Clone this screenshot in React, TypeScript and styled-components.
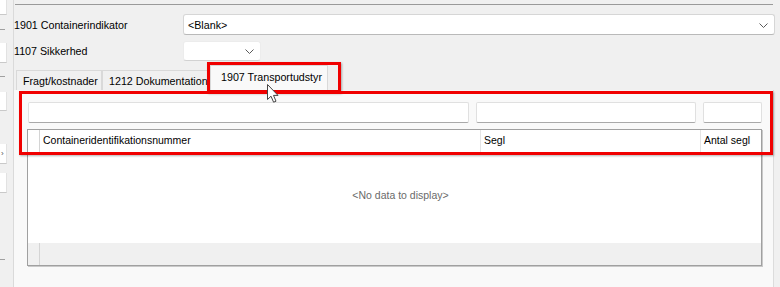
import React from "react";
import styled, { createGlobalStyle } from "styled-components";

const GlobalStyle = createGlobalStyle`
  html, body { margin: 0; padding: 0; background: #f0f0f0; }
  body { width: 780px; height: 287px; overflow: hidden; font-family: "Liberation Sans", Arial, sans-serif; }
  * { box-sizing: border-box; }
`;

const Window = styled.div`
  position: relative;
  display: flex;
  width: 780px;
  height: 287px;
  background: #f0f0f0;
  overflow: hidden;
`;

const LeftStrip = styled.div`
  width: 14px;
  flex: none;
  display: flex;
  flex-direction: column;
  border-right: 1px solid #dadada;
`;

const StubBox = styled.div<{ $top: number; $h: number }>`
  margin-top: ${(p) => p.$top}px;
  width: 7px;
  height: ${(p) => p.$h}px;
  background: #fff;
  border-bottom: 1px solid #c9c9c9;
  border-right: 1px solid #e2e2e2;
  font-size: 8px;
  color: #555;
  line-height: ${(p) => p.$h}px;
  overflow: hidden;
  text-indent: 1px;
`;

const StubLine = styled.div<{ $top: number }>`
  margin-top: ${(p) => p.$top}px;
  width: 5px;
  height: 1px;
  background: #a0a0a0;
`;

const Main = styled.div`
  flex: 1;
  display: flex;
  flex-direction: column;
  min-width: 0;
`;

const TopRule = styled.div`
  margin: 4px 7px 0 1px;
  height: 1px;
  background: #9a9a9a;
`;

const FormRow = styled.div<{ $top: number; $h: number }>`
  display: flex;
  align-items: center;
  margin-top: ${(p) => p.$top}px;
  height: ${(p) => p.$h}px;
`;

const Label = styled.div`
  width: 169px;
  flex: none;
  font-size: 10.7px;
  color: #000;
`;

const Combo = styled.div<{ $w?: number; $soft?: boolean }>`
  position: relative;
  display: flex;
  align-items: center;
  height: 100%;
  ${(p) => (p.$w ? `width: ${p.$w}px;` : "flex: 1; margin-right: 5px;")}
  background: #fff;
  border: 1px solid ${(p) => (p.$soft ? "#ececec" : "#d6d6d6")};
  border-bottom-color: ${(p) => (p.$soft ? "#d2d2d2" : "#b9b9b9")};
  border-radius: 3px;
  padding-left: 4px;
  font-size: 10.7px;
  color: #000;
`;

const Chevron = styled.svg`
  position: absolute;
  right: 6px;
  top: 50%;
  margin-top: -2px;
`;

const TabStrip = styled.div`
  display: flex;
  align-items: flex-end;
  height: 29px;
  padding-left: 2px;
`;

const Tab = styled.div<{ $w: number; $active?: boolean }>`
  width: ${(p) => p.$w}px;
  height: ${(p) => (p.$active ? 25 : 20)}px;
  flex: none;
  display: flex;
  align-items: center;
  padding-left: ${(p) => (p.$active ? 10 : 6)}px;
  padding-bottom: ${(p) => (p.$active ? 3 : 0)}px;
  font-size: 10.7px;
  color: #000;
  white-space: nowrap;
  overflow: hidden;
  background: ${(p) => (p.$active ? "#f9f9f9" : "#f0f0f0")};
  border: 1px solid #d9d9d9;
  border-bottom: none;
  margin-left: ${(p) => (p.$active ? 2 : 0)}px;
  & + & { border-left: ${(p) => (p.$active ? "1px solid #d9d9d9" : "none")}; }
`;

const TabPage = styled.div`
  flex: 1;
  display: flex;
  flex-direction: column;
  margin-right: 6px;
  background: #f9f9f9;
  border-right: 1px solid #dcdcdc;
  padding: 12px 0 0 13px;
`;

const FilterRow = styled.div`
  display: flex;
  height: 21px;
  padding-left: 1px;
`;

const FilterInput = styled.div<{ $w: number; $gap: number }>`
  width: ${(p) => p.$w}px;
  margin-right: ${(p) => p.$gap}px;
  height: 100%;
  background: #fff;
  border: 1px solid #e0e0e0;
  border-bottom-color: #a9a9a9;
  border-radius: 2px;
`;

const Grid = styled.div`
  margin-top: 6px;
  width: 735px;
  height: 137px;
  display: flex;
  flex-direction: column;
  background: #fff;
  border: 1px solid #a0a0a0;
  box-shadow: 1px 1px 0 #c9c9c9;
`;

const HeaderRow = styled.div`
  display: flex;
  height: 22px;
  flex: none;
  background: #fff;
`;

const IndicatorCell = styled.div`
  width: 12px;
  flex: none;
  border-right: 1px solid #d4d4d4;
`;

const HeaderCell = styled.div<{ $w?: number }>`
  ${(p) => (p.$w ? `width: ${p.$w}px; flex: none;` : "flex: 1;")}
  display: flex;
  align-items: center;
  padding-left: 3px;
  padding-bottom: 2px;
  font-size: 10.5px;
  color: #000;
  border-right: 1px solid #e4e4e4;
  white-space: nowrap;
  overflow: hidden;
  &:last-child { border-right: none; }
`;

const Body = styled.div`
  flex: 1;
  display: flex;
  align-items: center;
  justify-content: center;
  padding-left: 12px;
  padding-bottom: 5px;
  font-size: 10.5px;
  color: #6a6a6a;
`;

const Footer = styled.div`
  height: 22px;
  flex: none;
  display: flex;
  background: #f0f0f0;
`;

const Highlight = styled.div<{ $x: number; $y: number; $w: number; $h: number }>`
  position: absolute;
  left: ${(p) => p.$x}px;
  top: ${(p) => p.$y}px;
  width: ${(p) => p.$w}px;
  height: ${(p) => p.$h}px;
  border: 3px solid #f00000;
  box-shadow: 1px 1px 2px rgba(0, 0, 0, 0.3);
  pointer-events: none;
`;

const Cursor = styled.svg`
  position: absolute;
  left: 267px;
  top: 84px;
`;

const ChevronIcon = () => (
  <Chevron width="9" height="5" viewBox="0 0 9 5">
    <path d="M0.5 0.5 L4.5 4.5 L8.5 0.5" fill="none" stroke="#5a5a5a" strokeWidth="1" />
  </Chevron>
);

export default function App() {
  return (
    <>
      <GlobalStyle />
      <Window>
        <LeftStrip>
          <StubBox $top={0} $h={15} />
          <StubLine $top={14} />
          <StubBox $top={13} $h={20} />
          <StubLine $top={13} />
          <StubBox $top={15} $h={19} />
          <StubBox $top={33} $h={20}>›</StubBox>
          <StubBox $top={9} $h={20} />
          <StubLine $top={66} />
        </LeftStrip>
        <Main>
          <TopRule />
          <FormRow $top={9} $h={21}>
            <Label>1901 Containerindikator</Label>
            <Combo>
              &lt;Blank&gt;
              <ChevronIcon />
            </Combo>
          </FormRow>
          <FormRow $top={6} $h={20}>
            <Label>1107 Sikkerhed</Label>
            <Combo $w={78} $soft>
              <ChevronIcon />
            </Combo>
          </FormRow>
          <TabStrip>
            <Tab $w={86}>Fragt/kostnader</Tab>
            <Tab $w={106}>1212 Dokumentation</Tab>
            <Tab $w={118} $active>1907 Transportudstyr</Tab>
          </TabStrip>
          <TabPage>
            <FilterRow>
              <FilterInput $w={441} $gap={7} />
              <FilterInput $w={220} $gap={7} />
              <FilterInput $w={59} $gap={0} />
            </FilterRow>
            <Grid>
              <HeaderRow>
                <IndicatorCell />
                <HeaderCell $w={441}>Containeridentifikationsnummer</HeaderCell>
                <HeaderCell $w={220}>Segl</HeaderCell>
                <HeaderCell>Antal segl</HeaderCell>
              </HeaderRow>
              <Body>&lt;No data to display&gt;</Body>
              <Footer>
                <IndicatorCell />
              </Footer>
            </Grid>
          </TabPage>
        </Main>
        <Highlight $x={207} $y={62} $w={134} $h={31} />
        <Highlight $x={19} $y={91} $w={754} $h={64} />
        <Cursor width="14" height="20" viewBox="0 0 14 20">
          <path
            d="M0.5 0.5 L0.5 15.5 L4 12.2 L6.6 18.2 L9 17.2 L6.5 11.4 L11 11.4 Z"
            fill="#ffffff"
            stroke="#444"
            strokeWidth="1"
            strokeLinejoin="round"
          />
        </Cursor>
      </Window>
    </>
  );
}
